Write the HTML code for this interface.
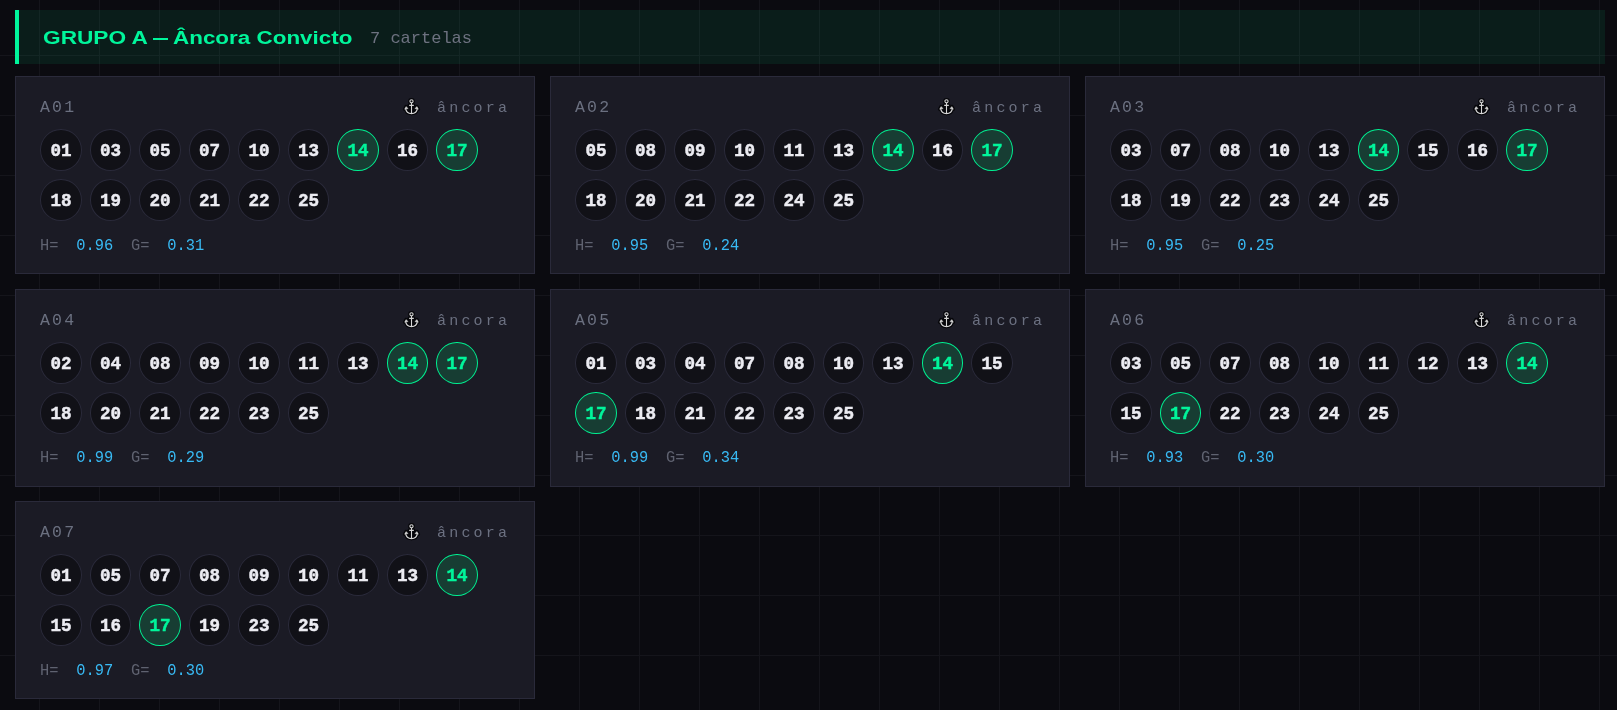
<!DOCTYPE html>
<html><head><meta charset="utf-8"><title>Grupo A</title>
<style>
html,body{margin:0;padding:0;}
.card{will-change:transform;}
.hdr{will-change:transform;}
body{width:1617px;height:710px;overflow:hidden;position:relative;background-color:#0b0b10;
background-image:linear-gradient(to right,#15151b 1px,transparent 1px),linear-gradient(to bottom,#15151b 1px,transparent 1px);
background-size:60px 60px;background-position:39px 55px;}
.hdr{position:absolute;left:15px;top:10px;width:1590px;height:54px;background:rgba(0,245,155,0.08);}
.bar{position:absolute;left:0;top:0;width:4px;height:54px;background:#00f59b;}
.ttl{position:absolute;top:1px;line-height:54px;font-family:"Liberation Sans",sans-serif;font-weight:700;font-size:18.9px;color:#00f59b;white-space:nowrap;transform-origin:0 50%;transform:scaleX(1.2);}
.dash{position:absolute;left:137.6px;top:27.8px;width:15px;height:2px;background:#00f59b;}
.sub{position:absolute;left:355px;top:1.5px;line-height:54px;font-family:"Liberation Mono",monospace;font-size:17px;color:#6d7280;white-space:nowrap;}
.card{position:absolute;width:518px;height:195.6px;background:#1b1b25;border:1px solid #2a2a3a;}
.lbl{position:absolute;left:24px;top:19px;line-height:24px;font-family:"Liberation Mono",monospace;font-size:16.5px;letter-spacing:2.2px;color:#6b7080;}
.tag{position:absolute;left:421px;top:19.8px;line-height:24px;font-family:"Liberation Mono",monospace;font-size:15px;letter-spacing:3.2px;color:#6b7080;white-space:nowrap;}
.anc{position:absolute;left:384px;top:18px;width:24px;height:23px;}
.anc svg{display:block;}
.b{position:absolute;width:39.5px;height:40px;border:1px solid #2a2a3a;border-radius:50%;background:#111117;color:#ececf2;font-family:"Liberation Mono",monospace;font-weight:700;font-size:17.6px;line-height:43.5px;text-align:center;margin-left:-1px;margin-top:-1px;-webkit-text-stroke:0.45px currentColor;}
.b.hot{border-color:#00ee90;background:#173d33;color:#00f59b;}
.met{position:absolute;left:24px;top:157px;line-height:24px;font-family:"Liberation Mono",monospace;font-size:15.4px;white-space:nowrap;transform:scaleY(1.1);transform-origin:0 17px;}
.met .k{color:#5f6270;margin-right:17.8px;}
.met .v{color:#38baf4;margin-right:17.8px;}

</style></head><body>
<div class="hdr"><div class="bar"></div><div class="ttl" style="left:28px">GRUPO A</div><div class="dash"></div><div class="ttl" style="left:158px;transform:scaleX(1.187)">Âncora Convicto</div><div class="sub">7 cartelas</div></div>
<div class="card" style="left:15px;top:76px">
<div class="lbl">A01</div>
<div class="anc"><svg width="24" height="23" viewBox="0 0 24 23"><g stroke="#050508" stroke-width="3.4" fill="none" stroke-linejoin="round" stroke-linecap="round" opacity="0.92"><circle cx="11.5" cy="6.3" r="1.7"/><path d="M11.5 8v10.6M9 10.4h5M5.6 13.4Q6.2 18.6 11.5 18.6Q16.8 18.6 17.4 13.4"/><path d="M4.6 14.2l1.4-2.6 2.2 2zM18.4 14.2l-1.4-2.6-2.2 2z"/><path d="M7 17l4.5 1.5 4.5-1.5-4.5-5z" fill="#050508"/></g><g stroke="#d6d6d6" stroke-width="1.1" fill="none" stroke-linejoin="round"><circle cx="11.5" cy="6.3" r="1.6"/><path d="M11.5 8v10.6M9.2 10.4h4.6M5.6 13.4Q6.2 18.6 11.5 18.6Q16.8 18.6 17.4 13.4"/></g><g fill="#d6d6d6" stroke="#d6d6d6" stroke-width="0.4" stroke-linejoin="round"><path d="M4.6 14.2l1.4-2.6 2.2 2zM18.4 14.2l-1.4-2.6-2.2 2z"/></g></svg></div>
<div class="tag">âncora</div>
<div class="b" style="left:25.30px;top:53.00px">01</div>
<div class="b" style="left:74.80px;top:53.00px">03</div>
<div class="b" style="left:124.30px;top:53.00px">05</div>
<div class="b" style="left:173.80px;top:53.00px">07</div>
<div class="b" style="left:223.30px;top:53.00px">10</div>
<div class="b" style="left:272.80px;top:53.00px">13</div>
<div class="b hot" style="left:322.30px;top:53.00px">14</div>
<div class="b" style="left:371.80px;top:53.00px">16</div>
<div class="b hot" style="left:421.30px;top:53.00px">17</div>
<div class="b" style="left:25.30px;top:103.00px">18</div>
<div class="b" style="left:74.80px;top:103.00px">19</div>
<div class="b" style="left:124.30px;top:103.00px">20</div>
<div class="b" style="left:173.80px;top:103.00px">21</div>
<div class="b" style="left:223.30px;top:103.00px">22</div>
<div class="b" style="left:272.80px;top:103.00px">25</div>
<div class="met"><span class="k">H=</span><span class="v">0.96</span><span class="k">G=</span><span class="v">0.31</span></div>
</div>
<div class="card" style="left:550px;top:76px">
<div class="lbl">A02</div>
<div class="anc"><svg width="24" height="23" viewBox="0 0 24 23"><g stroke="#050508" stroke-width="3.4" fill="none" stroke-linejoin="round" stroke-linecap="round" opacity="0.92"><circle cx="11.5" cy="6.3" r="1.7"/><path d="M11.5 8v10.6M9 10.4h5M5.6 13.4Q6.2 18.6 11.5 18.6Q16.8 18.6 17.4 13.4"/><path d="M4.6 14.2l1.4-2.6 2.2 2zM18.4 14.2l-1.4-2.6-2.2 2z"/><path d="M7 17l4.5 1.5 4.5-1.5-4.5-5z" fill="#050508"/></g><g stroke="#d6d6d6" stroke-width="1.1" fill="none" stroke-linejoin="round"><circle cx="11.5" cy="6.3" r="1.6"/><path d="M11.5 8v10.6M9.2 10.4h4.6M5.6 13.4Q6.2 18.6 11.5 18.6Q16.8 18.6 17.4 13.4"/></g><g fill="#d6d6d6" stroke="#d6d6d6" stroke-width="0.4" stroke-linejoin="round"><path d="M4.6 14.2l1.4-2.6 2.2 2zM18.4 14.2l-1.4-2.6-2.2 2z"/></g></svg></div>
<div class="tag">âncora</div>
<div class="b" style="left:25.30px;top:53.00px">05</div>
<div class="b" style="left:74.80px;top:53.00px">08</div>
<div class="b" style="left:124.30px;top:53.00px">09</div>
<div class="b" style="left:173.80px;top:53.00px">10</div>
<div class="b" style="left:223.30px;top:53.00px">11</div>
<div class="b" style="left:272.80px;top:53.00px">13</div>
<div class="b hot" style="left:322.30px;top:53.00px">14</div>
<div class="b" style="left:371.80px;top:53.00px">16</div>
<div class="b hot" style="left:421.30px;top:53.00px">17</div>
<div class="b" style="left:25.30px;top:103.00px">18</div>
<div class="b" style="left:74.80px;top:103.00px">20</div>
<div class="b" style="left:124.30px;top:103.00px">21</div>
<div class="b" style="left:173.80px;top:103.00px">22</div>
<div class="b" style="left:223.30px;top:103.00px">24</div>
<div class="b" style="left:272.80px;top:103.00px">25</div>
<div class="met"><span class="k">H=</span><span class="v">0.95</span><span class="k">G=</span><span class="v">0.24</span></div>
</div>
<div class="card" style="left:1085px;top:76px">
<div class="lbl">A03</div>
<div class="anc"><svg width="24" height="23" viewBox="0 0 24 23"><g stroke="#050508" stroke-width="3.4" fill="none" stroke-linejoin="round" stroke-linecap="round" opacity="0.92"><circle cx="11.5" cy="6.3" r="1.7"/><path d="M11.5 8v10.6M9 10.4h5M5.6 13.4Q6.2 18.6 11.5 18.6Q16.8 18.6 17.4 13.4"/><path d="M4.6 14.2l1.4-2.6 2.2 2zM18.4 14.2l-1.4-2.6-2.2 2z"/><path d="M7 17l4.5 1.5 4.5-1.5-4.5-5z" fill="#050508"/></g><g stroke="#d6d6d6" stroke-width="1.1" fill="none" stroke-linejoin="round"><circle cx="11.5" cy="6.3" r="1.6"/><path d="M11.5 8v10.6M9.2 10.4h4.6M5.6 13.4Q6.2 18.6 11.5 18.6Q16.8 18.6 17.4 13.4"/></g><g fill="#d6d6d6" stroke="#d6d6d6" stroke-width="0.4" stroke-linejoin="round"><path d="M4.6 14.2l1.4-2.6 2.2 2zM18.4 14.2l-1.4-2.6-2.2 2z"/></g></svg></div>
<div class="tag">âncora</div>
<div class="b" style="left:25.30px;top:53.00px">03</div>
<div class="b" style="left:74.80px;top:53.00px">07</div>
<div class="b" style="left:124.30px;top:53.00px">08</div>
<div class="b" style="left:173.80px;top:53.00px">10</div>
<div class="b" style="left:223.30px;top:53.00px">13</div>
<div class="b hot" style="left:272.80px;top:53.00px">14</div>
<div class="b" style="left:322.30px;top:53.00px">15</div>
<div class="b" style="left:371.80px;top:53.00px">16</div>
<div class="b hot" style="left:421.30px;top:53.00px">17</div>
<div class="b" style="left:25.30px;top:103.00px">18</div>
<div class="b" style="left:74.80px;top:103.00px">19</div>
<div class="b" style="left:124.30px;top:103.00px">22</div>
<div class="b" style="left:173.80px;top:103.00px">23</div>
<div class="b" style="left:223.30px;top:103.00px">24</div>
<div class="b" style="left:272.80px;top:103.00px">25</div>
<div class="met"><span class="k">H=</span><span class="v">0.95</span><span class="k">G=</span><span class="v">0.25</span></div>
</div>
<div class="card" style="left:15px;top:288.6px">
<div class="lbl">A04</div>
<div class="anc"><svg width="24" height="23" viewBox="0 0 24 23"><g stroke="#050508" stroke-width="3.4" fill="none" stroke-linejoin="round" stroke-linecap="round" opacity="0.92"><circle cx="11.5" cy="6.3" r="1.7"/><path d="M11.5 8v10.6M9 10.4h5M5.6 13.4Q6.2 18.6 11.5 18.6Q16.8 18.6 17.4 13.4"/><path d="M4.6 14.2l1.4-2.6 2.2 2zM18.4 14.2l-1.4-2.6-2.2 2z"/><path d="M7 17l4.5 1.5 4.5-1.5-4.5-5z" fill="#050508"/></g><g stroke="#d6d6d6" stroke-width="1.1" fill="none" stroke-linejoin="round"><circle cx="11.5" cy="6.3" r="1.6"/><path d="M11.5 8v10.6M9.2 10.4h4.6M5.6 13.4Q6.2 18.6 11.5 18.6Q16.8 18.6 17.4 13.4"/></g><g fill="#d6d6d6" stroke="#d6d6d6" stroke-width="0.4" stroke-linejoin="round"><path d="M4.6 14.2l1.4-2.6 2.2 2zM18.4 14.2l-1.4-2.6-2.2 2z"/></g></svg></div>
<div class="tag">âncora</div>
<div class="b" style="left:25.30px;top:53.00px">02</div>
<div class="b" style="left:74.80px;top:53.00px">04</div>
<div class="b" style="left:124.30px;top:53.00px">08</div>
<div class="b" style="left:173.80px;top:53.00px">09</div>
<div class="b" style="left:223.30px;top:53.00px">10</div>
<div class="b" style="left:272.80px;top:53.00px">11</div>
<div class="b" style="left:322.30px;top:53.00px">13</div>
<div class="b hot" style="left:371.80px;top:53.00px">14</div>
<div class="b hot" style="left:421.30px;top:53.00px">17</div>
<div class="b" style="left:25.30px;top:103.00px">18</div>
<div class="b" style="left:74.80px;top:103.00px">20</div>
<div class="b" style="left:124.30px;top:103.00px">21</div>
<div class="b" style="left:173.80px;top:103.00px">22</div>
<div class="b" style="left:223.30px;top:103.00px">23</div>
<div class="b" style="left:272.80px;top:103.00px">25</div>
<div class="met" style="margin-top:-0.6px"><span class="k">H=</span><span class="v">0.99</span><span class="k">G=</span><span class="v">0.29</span></div>
</div>
<div class="card" style="left:550px;top:288.6px">
<div class="lbl">A05</div>
<div class="anc"><svg width="24" height="23" viewBox="0 0 24 23"><g stroke="#050508" stroke-width="3.4" fill="none" stroke-linejoin="round" stroke-linecap="round" opacity="0.92"><circle cx="11.5" cy="6.3" r="1.7"/><path d="M11.5 8v10.6M9 10.4h5M5.6 13.4Q6.2 18.6 11.5 18.6Q16.8 18.6 17.4 13.4"/><path d="M4.6 14.2l1.4-2.6 2.2 2zM18.4 14.2l-1.4-2.6-2.2 2z"/><path d="M7 17l4.5 1.5 4.5-1.5-4.5-5z" fill="#050508"/></g><g stroke="#d6d6d6" stroke-width="1.1" fill="none" stroke-linejoin="round"><circle cx="11.5" cy="6.3" r="1.6"/><path d="M11.5 8v10.6M9.2 10.4h4.6M5.6 13.4Q6.2 18.6 11.5 18.6Q16.8 18.6 17.4 13.4"/></g><g fill="#d6d6d6" stroke="#d6d6d6" stroke-width="0.4" stroke-linejoin="round"><path d="M4.6 14.2l1.4-2.6 2.2 2zM18.4 14.2l-1.4-2.6-2.2 2z"/></g></svg></div>
<div class="tag">âncora</div>
<div class="b" style="left:25.30px;top:53.00px">01</div>
<div class="b" style="left:74.80px;top:53.00px">03</div>
<div class="b" style="left:124.30px;top:53.00px">04</div>
<div class="b" style="left:173.80px;top:53.00px">07</div>
<div class="b" style="left:223.30px;top:53.00px">08</div>
<div class="b" style="left:272.80px;top:53.00px">10</div>
<div class="b" style="left:322.30px;top:53.00px">13</div>
<div class="b hot" style="left:371.80px;top:53.00px">14</div>
<div class="b" style="left:421.30px;top:53.00px">15</div>
<div class="b hot" style="left:25.30px;top:103.00px">17</div>
<div class="b" style="left:74.80px;top:103.00px">18</div>
<div class="b" style="left:124.30px;top:103.00px">21</div>
<div class="b" style="left:173.80px;top:103.00px">22</div>
<div class="b" style="left:223.30px;top:103.00px">23</div>
<div class="b" style="left:272.80px;top:103.00px">25</div>
<div class="met" style="margin-top:-0.6px"><span class="k">H=</span><span class="v">0.99</span><span class="k">G=</span><span class="v">0.34</span></div>
</div>
<div class="card" style="left:1085px;top:288.6px">
<div class="lbl">A06</div>
<div class="anc"><svg width="24" height="23" viewBox="0 0 24 23"><g stroke="#050508" stroke-width="3.4" fill="none" stroke-linejoin="round" stroke-linecap="round" opacity="0.92"><circle cx="11.5" cy="6.3" r="1.7"/><path d="M11.5 8v10.6M9 10.4h5M5.6 13.4Q6.2 18.6 11.5 18.6Q16.8 18.6 17.4 13.4"/><path d="M4.6 14.2l1.4-2.6 2.2 2zM18.4 14.2l-1.4-2.6-2.2 2z"/><path d="M7 17l4.5 1.5 4.5-1.5-4.5-5z" fill="#050508"/></g><g stroke="#d6d6d6" stroke-width="1.1" fill="none" stroke-linejoin="round"><circle cx="11.5" cy="6.3" r="1.6"/><path d="M11.5 8v10.6M9.2 10.4h4.6M5.6 13.4Q6.2 18.6 11.5 18.6Q16.8 18.6 17.4 13.4"/></g><g fill="#d6d6d6" stroke="#d6d6d6" stroke-width="0.4" stroke-linejoin="round"><path d="M4.6 14.2l1.4-2.6 2.2 2zM18.4 14.2l-1.4-2.6-2.2 2z"/></g></svg></div>
<div class="tag">âncora</div>
<div class="b" style="left:25.30px;top:53.00px">03</div>
<div class="b" style="left:74.80px;top:53.00px">05</div>
<div class="b" style="left:124.30px;top:53.00px">07</div>
<div class="b" style="left:173.80px;top:53.00px">08</div>
<div class="b" style="left:223.30px;top:53.00px">10</div>
<div class="b" style="left:272.80px;top:53.00px">11</div>
<div class="b" style="left:322.30px;top:53.00px">12</div>
<div class="b" style="left:371.80px;top:53.00px">13</div>
<div class="b hot" style="left:421.30px;top:53.00px">14</div>
<div class="b" style="left:25.30px;top:103.00px">15</div>
<div class="b hot" style="left:74.80px;top:103.00px">17</div>
<div class="b" style="left:124.30px;top:103.00px">22</div>
<div class="b" style="left:173.80px;top:103.00px">23</div>
<div class="b" style="left:223.30px;top:103.00px">24</div>
<div class="b" style="left:272.80px;top:103.00px">25</div>
<div class="met" style="margin-top:-0.6px"><span class="k">H=</span><span class="v">0.93</span><span class="k">G=</span><span class="v">0.30</span></div>
</div>
<div class="card" style="left:15px;top:501.2px">
<div class="lbl">A07</div>
<div class="anc"><svg width="24" height="23" viewBox="0 0 24 23"><g stroke="#050508" stroke-width="3.4" fill="none" stroke-linejoin="round" stroke-linecap="round" opacity="0.92"><circle cx="11.5" cy="6.3" r="1.7"/><path d="M11.5 8v10.6M9 10.4h5M5.6 13.4Q6.2 18.6 11.5 18.6Q16.8 18.6 17.4 13.4"/><path d="M4.6 14.2l1.4-2.6 2.2 2zM18.4 14.2l-1.4-2.6-2.2 2z"/><path d="M7 17l4.5 1.5 4.5-1.5-4.5-5z" fill="#050508"/></g><g stroke="#d6d6d6" stroke-width="1.1" fill="none" stroke-linejoin="round"><circle cx="11.5" cy="6.3" r="1.6"/><path d="M11.5 8v10.6M9.2 10.4h4.6M5.6 13.4Q6.2 18.6 11.5 18.6Q16.8 18.6 17.4 13.4"/></g><g fill="#d6d6d6" stroke="#d6d6d6" stroke-width="0.4" stroke-linejoin="round"><path d="M4.6 14.2l1.4-2.6 2.2 2zM18.4 14.2l-1.4-2.6-2.2 2z"/></g></svg></div>
<div class="tag">âncora</div>
<div class="b" style="left:25.30px;top:53.00px">01</div>
<div class="b" style="left:74.80px;top:53.00px">05</div>
<div class="b" style="left:124.30px;top:53.00px">07</div>
<div class="b" style="left:173.80px;top:53.00px">08</div>
<div class="b" style="left:223.30px;top:53.00px">09</div>
<div class="b" style="left:272.80px;top:53.00px">10</div>
<div class="b" style="left:322.30px;top:53.00px">11</div>
<div class="b" style="left:371.80px;top:53.00px">13</div>
<div class="b hot" style="left:421.30px;top:53.00px">14</div>
<div class="b" style="left:25.30px;top:103.00px">15</div>
<div class="b" style="left:74.80px;top:103.00px">16</div>
<div class="b hot" style="left:124.30px;top:103.00px">17</div>
<div class="b" style="left:173.80px;top:103.00px">19</div>
<div class="b" style="left:223.30px;top:103.00px">23</div>
<div class="b" style="left:272.80px;top:103.00px">25</div>
<div class="met"><span class="k">H=</span><span class="v">0.97</span><span class="k">G=</span><span class="v">0.30</span></div>
</div>
</body></html>
